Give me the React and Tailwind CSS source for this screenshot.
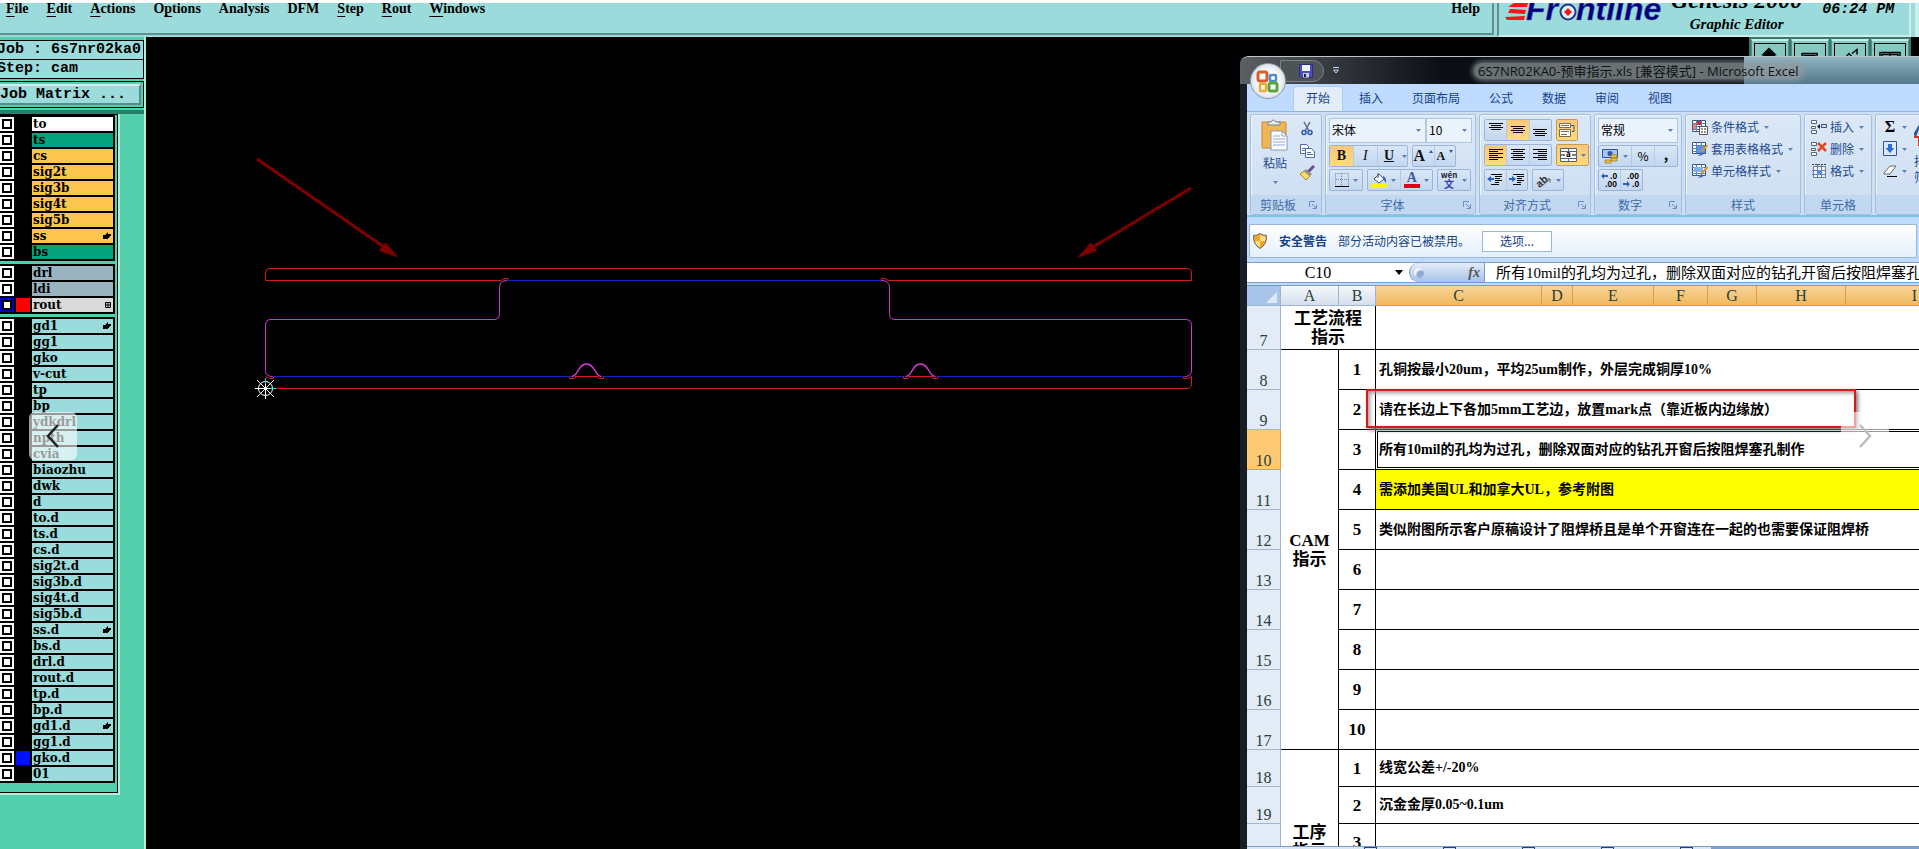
import { useState } from "react";
import clsx from "clsx";

const menus = [
  ["", "F", "ile"],
  ["", "E", "dit"],
  ["", "A", "ctions"],
  ["O", "p", "tions"],
  ["Analysis", "", ""],
  ["DFM", "", ""],
  ["", "S", "tep"],
  ["", "R", "out"],
  ["", "W", "indows"],
];

const layerGroups = [
  [
    { name: "to", bg: "bg-white" },
    { name: "ts", bg: "bg-[#05a47c]" },
    { name: "cs", bg: "bg-[#fdc74f]" },
    { name: "sig2t", bg: "bg-[#fdc74f]" },
    { name: "sig3b", bg: "bg-[#fdc74f]" },
    { name: "sig4t", bg: "bg-[#fdc74f]" },
    { name: "sig5b", bg: "bg-[#fdc74f]" },
    { name: "ss", bg: "bg-[#fdc74f]", mark: "hand" },
    { name: "bs", bg: "bg-[#05a47c]" },
  ],
  [
    { name: "drl", bg: "bg-[#9ab4bf]" },
    { name: "ldi", bg: "bg-[#9ab4bf]" },
    { name: "rout", bg: "bg-[#dadada]", box: "bg-[#0000c8]", color: "bg-[#ff0000]", mark: "grid" },
  ],
  [
    { name: "gd1", mark: "hand" },
    { name: "gg1" },
    { name: "gko" },
    { name: "v-cut" },
    { name: "tp" },
    { name: "bp" },
    { name: "ydkdrl" },
    { name: "npth" },
    { name: "cvia" },
    { name: "biaozhu" },
    { name: "dwk" },
    { name: "d" },
    { name: "to.d" },
    { name: "ts.d" },
    { name: "cs.d" },
    { name: "sig2t.d" },
    { name: "sig3b.d" },
    { name: "sig4t.d" },
    { name: "sig5b.d" },
    { name: "ss.d", mark: "hand" },
    { name: "bs.d" },
    { name: "drl.d" },
    { name: "rout.d" },
    { name: "tp.d" },
    { name: "bp.d" },
    { name: "gd1.d", mark: "hand" },
    { name: "gg1.d" },
    { name: "gko.d", color: "bg-[#0010ff]" },
    { name: "01" },
  ],
];

const tabs = ["开始", "插入", "页面布局", "公式", "数据", "审阅", "视图"];

const columns = [
  ["A", 58],
  ["B", 37],
  ["C", 166],
  ["D", 31],
  ["E", 81],
  ["F", 54],
  ["G", 49],
  ["H", 89],
  ["I", 138],
];

const camRows = [
  { row: 8, no: 1, text: "孔铜按最小20um，平均25um制作，外层完成铜厚10%" },
  { row: 9, no: 2, text: "请在长边上下各加5mm工艺边，放置mark点（靠近板内边缘放）" },
  { row: 10, no: 3, text: "所有10mil的孔均为过孔，删除双面对应的钻孔开窗后按阻焊塞孔制作", active: true },
  { row: 11, no: 4, text: "需添加美国UL和加拿大UL，参考附图", fill: "bg-[#ffff00]" },
  { row: 12, no: 5, text: "类似附图所示客户原稿设计了阻焊桥且是单个开窗连在一起的也需要保证阻焊桥" },
  { row: 13, no: 6 },
  { row: 14, no: 7 },
  { row: 15, no: 8 },
  { row: 16, no: 9 },
  { row: 17, no: 10 },
];

const processRows = [
  { row: 18, no: 1, text: "线宽公差+/-20%" },
  { row: 19, no: 2, text: "沉金金厚0.05~0.1um" },
  { row: 20, no: 3 },
  { row: 21, no: 4 },
  { row: 22, no: 5 },
];

/* ---------- Genesis editor ---------- */

function FrontlineLogo() {
  return (
    <svg width="166" height="30" viewBox="0 0 166 30" className="shrink-0" role="img" aria-label="Frontline">
      <g fill="#f01818">
        <path d="M9 0h14l-1 4H3z" />
        <path d="M5 6l16 1-1 4L3 10z" />
        <path d="M0 14l20-1-1 4H2z" />
      </g>
      <text
        x="21"
        y="17"
        className="font-['Liberation_Sans'] text-[32px] font-bold italic"
        fill="#00007c"
        stroke="#5a6fae"
        strokeWidth="0.5"
      >
        Fr
      </text>
      <circle cx="63" cy="9" r="7.5" fill="#d9f2f4" stroke="#2a3690" strokeWidth="2" />
      <path d="M63 5l4 4-4 4-4-4z" fill="#f01818" />
      <text
        x="71"
        y="17"
        className="font-['Liberation_Sans'] text-[32px] font-bold italic"
        fill="#00007c"
        stroke="#5a6fae"
        strokeWidth="0.5"
      >
        ntline
      </text>
    </svg>
  );
}

function TopBar() {
  return (
    <header className="flex h-[37px] shrink-0 border-t-[3px] border-white bg-[#9cdbdb] font-['Liberation_Serif',serif] text-black">
      <nav className="mb-0.5 flex flex-1 items-start gap-[18px] border-r-2 border-b-2 border-[#5f8f8f] pl-1.5 text-sm leading-3 font-bold">
        {menus.map(([pre, key, post]) => (
          <button key={pre + key + post} className="leading-3 whitespace-nowrap">
            {pre}
            <span className="underline underline-offset-[3px]">{key}</span>
            {post}
          </button>
        ))}
        <button className="ml-auto pr-3 leading-3">Help</button>
      </nav>
      <div className="ml-[3px] flex w-[414px] border-r-2 border-b-2 border-l-2 border-[#cdeeee] border-l-[#5f8f8f]">
        <div className="pl-1.5">
          <FrontlineLogo />
        </div>
        <div className="flex flex-1 flex-col items-center pr-5">
          <div className="flex h-[5px] w-full items-end justify-center overflow-hidden">
            <p className="text-2xl leading-4 font-bold whitespace-nowrap italic">Genesis 2000</p>
          </div>
          <p className="mt-1.5 text-[15px] leading-5 font-bold whitespace-nowrap italic">Graphic Editor</p>
        </div>
        <p className="w-[88px] pt-px font-['Liberation_Mono',monospace] text-[15px] leading-3 font-bold whitespace-nowrap italic">
          06:24 PM
        </p>
      </div>
      <div className="ml-1 w-1 bg-[#c6f1ef]" />
    </header>
  );
}

function LayerMark({ type }) {
  if (type === "hand") {
    return (
      <svg width="8" height="8" viewBox="0 0 8 8">
        <path d="M0 3h2l3-3v2h3v2H7v1H6v1H5v1H1L0 7z" fill="#000" />
      </svg>
    );
  }
  return (
    <svg width="6" height="6" viewBox="0 0 6 6">
      <path d="M.5.5h5v5h-5zM3 .5v5M.5 3h5" fill="none" stroke="#000" />
    </svg>
  );
}

function LayerRow({ layer }) {
  return (
    <label className="flex h-4 gap-0.5 bg-black pb-0.5">
      <span className={clsx("flex w-3.5 items-center pl-0.5", layer.box || "bg-white")}>
        <input type="checkbox" className="size-2.5 appearance-none border-2 border-black bg-white" />
      </span>
      <span className={clsx("w-3.5", layer.color)} />
      <span
        className={clsx(
          "flex w-[81px] items-center justify-between pr-0.5 pl-px font-['DejaVu_Serif',serif] text-xs leading-3 font-bold",
          layer.bg || "bg-[#9cdbdb]"
        )}
      >
        {layer.name}
        {layer.mark && <LayerMark type={layer.mark} />}
      </span>
    </label>
  );
}

function LayerPanel() {
  return (
    <aside className="w-[146px] shrink-0 border-r-2 border-[#b4ecd9] bg-[#53cfae] font-['Liberation_Mono',monospace]">
      <div className="border-b-4 border-[#2a7f6b] pt-[3px] pb-0.5">
        <div className="border border-l-0 border-black bg-[#9cdbdb] text-[15px] font-bold whitespace-nowrap">
          <p className="-ml-[3px] h-[19px] leading-[18px]">Job : 6s7nr02ka0</p>
          <p className="-ml-[3px] h-[18px] leading-[17px] shadow-[0_-1px_0_#000]">Step: cam</p>
        </div>
        <div className="mt-0.5 border border-l-0 border-black p-0.5 pl-0">
          <button className="block h-[21px] w-full border-t-2 border-r-2 border-b-2 border-[#528f8c] border-t-[#c6f3ee] bg-[#9cdbdb] text-left text-[15px] leading-4 font-bold whitespace-nowrap">
            Job Matrix ...
          </button>
        </div>
      </div>
      <div className="w-[120px] border-r-2 border-b-2 border-[#b4ecd9] text-black">
        <div className="flex flex-col gap-[3px] border-t border-r border-b border-black pb-[9px]">
          {layerGroups.map((group, i) => (
            <div key={i} className="w-[115px] border-t-2 border-black bg-black">
              {group.map((layer) => (
                <LayerRow key={layer.name} layer={layer} />
              ))}
            </div>
          ))}
        </div>
      </div>
    </aside>
  );
}

function Bump() {
  return (
    <>
      <path d="M-16 .5h32" stroke="#000" />
      <path d="M-12 .5h24M-17 .5v2h5l1.500-2M17 .5v2h-5l-1.500-2" stroke="#d41c1c" />
      <path d="M-15 .5C-8 .5-9-12 0-12S8 .5 15 .5" stroke="#d23cd2" strokeWidth="1.300" />
    </>
  );
}

function BoardCanvas() {
  return (
    <div className="min-w-0 flex-1 overflow-hidden bg-black">
      <svg width="1100" height="420" viewBox="146 37 1100 420" fill="none">
        <g stroke="#d41c1c">
          <path d="M265.500 280.500v-8q0-4 4-4h918q4 0 4 4v8H888l-3-2h-4v2" />
          <path d="M265.500 280.500H501l3-2h4v2" />
          <path d="M265.500 376.500l4 2h4v-2M265.500 388.500H1187q4.500 0 4.500-4.500v-7.500l-4 2h-4v-2" />
        </g>
        <path d="M508 280.500h373M273 376.500h910" stroke="#1420c0" />
        <g stroke="#d23cd2">
          <path d="M507 280.500q-7.500 0-7.500 7v26q0 6-5.500 6H271q-5.500 0-5.500 6v45q0 6 7 6" />
          <path d="M881 280.500q8.500 0 8.500 7v26q0 6 5.500 6h290.500q6 0 6 6v45q0 6-7 6" />
        </g>
        <g transform="translate(586.500 376)">
          <Bump />
        </g>
        <g transform="translate(920.500 376)">
          <Bump />
        </g>
        <g stroke="#fff">
          <circle cx="265.500" cy="388.500" r="7" />
          <path d="M255 388.500h21M265.500 378v21M257 380l17 17M274 380l-17 17" />
        </g>
        <path d="M265.500 378v6M270 388.500h6" stroke="#2ad4dc" />
        <g stroke="#800000" strokeWidth="3" fill="#800000">
          <path d="M257 159l127 88M1191 188l-98 59" />
          <path d="M397 256.500l-17.500-6 6-7.500z" strokeWidth="1" />
          <path d="M1078.500 257l18-6.500-5.500-7.500z" strokeWidth="1" />
        </g>
      </svg>
    </div>
  );
}

function ViewTools() {
  return (
    <div className="absolute top-[37px] right-2 flex gap-0.5 bg-[#3d7668] px-0.5 pt-0.5">
      {[
        "M11 19v-6H7l3-3H8l6-6 6 6h-2l3 3h-4v6z",
        "M7 19V9h15v10M9 19v-8h11v8",
        "M5 19l9-10 9 10M17 9l5-4v5M13 16l4-3",
        "M5 19V8h20v11M15 8v11M7 19v-9h16v9",
      ].map((d, i) => (
        <button
          key={d}
          aria-label={["Up", "Screen", "Home", "Split"][i]}
          className="h-10 w-[38px] border border-t-2 border-[#4d8f86] border-t-[#bdeee6] bg-[#86c9c1] p-0.5"
        >
          <svg viewBox="0 0 30 30" className="h-full w-full border border-black">
            <path d={d} fill={i === 0 ? "#000" : "none"} stroke="#000" strokeWidth="1.500" />
          </svg>
        </button>
      ))}
    </div>
  );
}

/* ---------- Excel window ---------- */

function Caret({ className }) {
  return (
    <svg width="5" height="3" viewBox="0 0 5 3" className={clsx("shrink-0", className)}>
      <path d="M0 0h5L2.500 3z" fill="#5b82b8" />
    </svg>
  );
}

function RibbonGroup({ title, launcher, className, children }) {
  return (
    <section
      className={clsx(
        "flex h-[101px] shrink-0 flex-col overflow-hidden rounded-[3px] border border-[#a3bfdf] bg-linear-to-b from-[#dce8f6] to-[#ccdef2] shadow-[inset_1px_1px_0_#eef5fc]",
        className
      )}
    >
      <div className="flex-1">{children}</div>
      <div className="flex h-[19px] items-center justify-center bg-[#c1d8f0] text-xs leading-4 text-[#3e6aaa]">
        <span className="flex-1 text-center">{title}</span>
        {launcher && (
          <button aria-label={title + "设置"} className="mx-1">
            <svg width="8" height="8" viewBox="0 0 8 8" fill="none" stroke="#6a8fc0">
              <path d="M.5 6V.5H6M3 3l4 4M7.500 3.500v4h-4" />
            </svg>
          </button>
        )}
      </div>
    </section>
  );
}

function Segment({ className, children }) {
  return (
    <div
      className={clsx(
        "flex h-[22px] divide-x divide-[#b4cae6] overflow-hidden rounded-[2px] border border-[#9ab5d9] bg-linear-to-b from-[#d9e6f6] to-[#c3d7f0]",
        className
      )}
    >
      {children}
    </div>
  );
}

function Tool({ label, on, className, children }) {
  return (
    <button
      aria-label={label}
      className={clsx(
        "flex flex-1 items-center justify-center gap-1",
        on && "bg-linear-to-b from-[#fbc77a] to-[#fdda7e]",
        className
      )}
    >
      {children}
    </button>
  );
}

function Combo({ label, value, className }) {
  return (
    <div className={clsx("relative h-[25px] border border-[#b0c8e8] bg-[#eaf2fb]", className)}>
      <select
        aria-label={label}
        defaultValue={value}
        className="block h-[21px] w-full appearance-none pl-0.5 text-xs text-black outline-none"
      >
        <option>{value}</option>
      </select>
      <Caret className="pointer-events-none absolute top-2.5 right-1" />
    </div>
  );
}

function Lines({ rows, y = 3 }) {
  return (
    <svg width="16" height="16" viewBox="0 0 16 16" stroke="#000">
      {rows.map(([x1, x2], i) => (
        <path key={i} d={`M${x1} ${y + i * 2 + 0.5}H${x2}`} />
      ))}
    </svg>
  );
}

const barsWide = [[1, 15], [3, 13], [1, 15], [3, 13]];

function IndentIcon({ out }) {
  return (
    <svg width="16" height="16" viewBox="0 0 16 16">
      <path d="M4 2.500h11M8 4.500h7M8 6.500h5M8 8.500h7M8 10.500h4M4 12.500h8" stroke="#000" />
      <path d={out ? "M0 7l4-3v2h3v2H4v2z" : "M7 7L3 4v2H0v2h3v2z"} fill="#2f62c0" />
    </svg>
  );
}

function TableIcon({ kind }) {
  return (
    <svg width="16" height="16" viewBox="0 0 16 16" fill="none" className="shrink-0">
      <path d="M.5 1.500h13v11H.5z" fill="#fff" stroke="#34558c" />
      <path d="M.5 4.500h13M.5 7.500h13M.5 10.500h13M4.500 1.500v11M9.500 1.500v11" stroke="#5b7fb8" />
      {kind === "cond" && (
        <>
          <path d="M5 2h4v4H5z" fill="#d2322a" />
          <path d="M1 5h3v5H1z" fill="#e88078" />
          <path d="M7.500 7.500h8v8h-8z" fill="#fff" stroke="#555" />
          <path d="M9 10h2M12 10h2M9 13h2M12 13h2" stroke="#222" />
        </>
      )}
      {kind === "table" && <path d="M5 5h8v7H5z" fill="#5b97e0" />}
      {kind === "cell" && <path d="M2 4h9v5H2z" fill="#7fb2ee" />}
      {kind !== "cond" && (
        <>
          <path d="M15.500 4L9 11" stroke="#d9962a" strokeWidth="2" />
          <path d="M10 10l-4 5 5-1z" fill="#3f74c8" />
        </>
      )}
    </svg>
  );
}

function CellsIcon({ kind }) {
  if (kind === "format") {
    return (
      <svg width="16" height="16" viewBox="0 0 16 16" fill="none" stroke="#444">
        <path d="M2.500 3.500h12v11h-12zM6.500 1v14M10.500 1v14M1 7.500h14M1 11.500h14" fill="#eef4fc" stroke="#6a7c98" />
        <path d="M6 7h5v5H6z" fill="#5b8fdc" stroke="none" />
        <path d="M1 1.500h14" strokeDasharray="2 1" />
      </svg>
    );
  }
  return (
    <svg width="16" height="16" viewBox="0 0 16 16" fill="none">
      <path d="M.5 1.500h5v3h-5zM.5 11.500h5v3h-5zM.5 7.500h4v2h-4z" fill="#fff" stroke="#53647e" />
      {kind === "insert" ? (
        <>
          <path d="M6 7.500l3-2.500v5z" fill="#222" />
          <path d="M10.500 5.500h5v3h-5z" fill="#cfe0f6" stroke="#34558c" />
        </>
      ) : (
        <path d="M7 2l8 8M15 2L7 10" stroke="#e04a2a" strokeWidth="2.500" />
      )}
    </svg>
  );
}

function TextTool({ icon, children }) {
  return (
    <button className="flex h-[22px] items-center gap-[3px] text-xs whitespace-nowrap text-[#1e4a90]">
      {icon}
      {children}
      <Caret className="ml-0.5" />
    </button>
  );
}

function Ribbon() {
  return (
    <div className="flex h-[106px] shrink-0 gap-[3px] overflow-hidden border-t border-b-2 border-[#8db4e3] border-b-[#7fc4dc] bg-[#cfdff3] px-[3px] pt-0.5">
      <RibbonGroup title="剪贴板" launcher className="w-[72px]">
        <div className="flex h-full">
          <button className="flex w-12 flex-col items-center pt-1 text-xs text-[#1e4a90]">
            <svg width="28" height="32" viewBox="0 0 28 32">
              <rect x="1" y="3" width="24" height="26" rx="1" fill="#eeb655" stroke="#c08a35" />
              <path d="M7 6V3h3q2-4 5 0h4v3z" fill="#e8edf3" stroke="#75808e" />
              <path d="M10 12h11l5 5v14H10z" fill="#fff" stroke="#8299bb" />
              <path d="M21 12v5h5M12 17h7M12 20h12M12 23h12M12 26h12" fill="none" stroke="#8ba6d2" />
            </svg>
            <span className="mt-0.5 leading-5">粘贴</span>
            <Caret className="mt-2" />
          </button>
          <div className="flex flex-col items-center gap-1.5 pt-1.5">
            <button aria-label="剪切">
              <svg width="16" height="16" viewBox="0 0 16 16" fill="none">
                <path d="M5 1l5 9M11 1L6 10" stroke="#5a6f8c" strokeWidth="1.500" />
                <circle cx="5" cy="11.500" r="2" stroke="#2858b4" strokeWidth="1.500" />
                <circle cx="11" cy="11.500" r="2" stroke="#2858b4" strokeWidth="1.500" />
              </svg>
            </button>
            <button aria-label="复制">
              <svg width="16" height="16" viewBox="0 0 16 16" fill="#fff" stroke="#4a6fae">
                <path d="M1.500 1.500h6l2 2v7h-8zM3 5.500h4M3 7.500h4" />
                <path d="M6.500 5.500h6l3 3v6h-9zM8 9.500h4M8 11.500h6" />
              </svg>
            </button>
            <button aria-label="格式刷">
              <svg width="16" height="16" viewBox="0 0 16 16">
                <path d="M15 1l-6 6" stroke="#6a4a90" strokeWidth="3" />
                <path d="M7 4l6 5-2 2-6-5z" fill="#8a8f98" />
                <path d="M5 6l6 5-4 4-6-6z" fill="#f3dc6c" stroke="#a88a2a" />
              </svg>
            </button>
          </div>
        </div>
      </RibbonGroup>

      <RibbonGroup title="字体" launcher className="w-[151px]">
        <div className="flex flex-col gap-0.5 pt-[3px] pl-[3px]">
          <div className="flex">
            <Combo label="字体" value="宋体" className="w-[97px]" />
            <Combo label="字号" value="10" className="w-[46px]" />
          </div>
          <div className="flex gap-1 font-['Liberation_Serif',serif] text-[#111]">
            <Segment className="w-[79px]">
              <Tool label="加粗" on><b className="text-sm leading-4">B</b></Tool>
              <Tool label="倾斜"><i className="text-sm leading-4">I</i></Tool>
              <Tool label="下划线" className="pl-1.5"><u className="mr-1 text-sm leading-4 font-bold">U</u><Caret /></Tool>
            </Segment>
            <Segment className="w-11">
              <Tool label="增大字号" className="gap-0">
                <b className="text-base leading-4">A</b>
                <svg width="4" height="3" viewBox="0 0 4 3" className="mb-2.5"><path d="M2 0l2 3H0z" fill="#2f559c" /></svg>
              </Tool>
              <Tool label="减小字号" className="gap-0">
                <b className="text-xs leading-4">A</b>
                <svg width="4" height="3" viewBox="0 0 4 3" className="mb-2.5"><path d="M0 0h4L2 3z" fill="#2f559c" /></svg>
              </Tool>
            </Segment>
          </div>
          <div className="flex gap-1">
            <Segment className="w-[34px]">
              <Tool label="边框">
                <svg width="14" height="14" viewBox="0 0 14 14" fill="none" stroke="#7a8698">
                  <path d="M.5.5h13v12M.5.5v12M6.500 1v12M1 6.500h13" strokeDasharray="1 1" />
                  <path d="M0 13.500h14" stroke="#000" />
                </svg>
                <Caret />
              </Tool>
            </Segment>
            <Segment className="w-[66px]">
              <Tool label="填充颜色">
                <svg width="16" height="16" viewBox="0 0 16 16">
                  <path d="M7 1v5M3 7l5-5 5 5-5 4z" fill="#f4f7fb" stroke="#44556e" />
                  <path d="M12 4q4 2 3 7-2-3-3-4z" fill="#3464b8" />
                  <path d="M0 12h16v4H0z" fill="#f8f800" />
                </svg>
                <Caret />
              </Tool>
              <Tool label="字体颜色">
                <span className="flex w-4 flex-col items-center border-b-4 border-[#e00018] font-['Liberation_Serif',serif] text-sm leading-3 font-bold text-[#3a5c9c]">
                  A
                </span>
                <Caret />
              </Tool>
            </Segment>
            <Segment className="w-[34px]">
              <Tool label="拼音">
                <svg width="17" height="18" viewBox="0 0 17 18" textAnchor="middle" fontWeight="bold">
                  <text x="8" y="7" fontSize="8" fill="#222233">wén</text>
                  <text x="8" y="17" fontSize="10" fill="#3a3fa8">文</text>
                </svg>
                <Caret />
              </Tool>
            </Segment>
          </div>
        </div>
      </RibbonGroup>

      <RibbonGroup title="对齐方式" launcher className="w-28">
        <div className="flex flex-col gap-[3px] pt-1 pl-1">
          <div className="flex gap-1">
            <Segment className="w-[68px]">
              <Tool label="顶端对齐"><Lines rows={barsWide} y={1} /></Tool>
              <Tool label="垂直居中" on><Lines rows={barsWide} y={4} /></Tool>
              <Tool label="底端对齐"><Lines rows={barsWide} y={7} /></Tool>
            </Segment>
            <Segment className="w-[22px] border-[#c79a4e]">
              <Tool label="自动换行" on>
                <svg width="16" height="16" viewBox="0 0 16 16" fill="#fff" stroke="#7b6a4e">
                  <path d="M.5 1.500h11v4H.5zM.5 7.500h11v7H.5z" />
                  <path d="M2 3.500h8M2 9.500h8M2 12.500h6" />
                  <path d="M12 3.500h3v6h-2" fill="none" stroke="#34558c" />
                </svg>
              </Tool>
            </Segment>
          </div>
          <div className="flex gap-1">
            <Segment className="w-[68px]">
              <Tool label="左对齐" on><Lines rows={[[1, 15], [1, 10], [1, 15], [1, 10], [1, 15], [1, 10]]} y={2} /></Tool>
              <Tool label="居中"><Lines rows={[[1, 15], [3, 13], [1, 15], [3, 13], [1, 15], [3, 13]]} y={2} /></Tool>
              <Tool label="右对齐"><Lines rows={[[1, 15], [6, 15], [1, 15], [6, 15], [1, 15], [6, 15]]} y={2} /></Tool>
            </Segment>
            <Segment className="w-[33px] border-[#c79a4e]">
              <Tool label="合并后居中" on>
                <svg width="17" height="16" viewBox="0 0 17 16" fill="#fff" stroke="#4c6488">
                  <path d="M.5 1.500h16v13H.5zM.5 4.500h16M.5 11.500h16M8.500 1.500v3M8.500 11.500v3" />
                  <text x="6" y="10" fontSize="8" fontWeight="bold" fill="#000" stroke="none">a</text>
                  <path d="M1 8h4M12 8h4" stroke="#000" />
                </svg>
                <Caret />
              </Tool>
            </Segment>
          </div>
          <div className="flex gap-1">
            <Segment className="w-[44px]">
              <Tool label="减少缩进量"><IndentIcon out /></Tool>
              <Tool label="增加缩进量"><IndentIcon /></Tool>
            </Segment>
            <Segment className="w-8">
              <Tool label="方向">
                <svg width="16" height="16" viewBox="0 0 16 16">
                  <text x="0" y="13" fontSize="10" fontWeight="bold" fill="#333" transform="rotate(-40 6 10)">ab</text>
                  <path d="M6 14l8-7M10.500 7H14v3.500" fill="none" stroke="#666" />
                </svg>
                <Caret />
              </Tool>
            </Segment>
          </div>
        </div>
      </RibbonGroup>

      <RibbonGroup title="数字" launcher className="w-[88px]">
        <div className="flex flex-col gap-0.5 pt-[3px] pl-[3px]">
          <Combo label="数字格式" value="常规" className="w-20" />
          <Segment className="w-20">
            <Tool label="会计数字格式" className="min-w-[33px]">
              <svg width="17" height="16" viewBox="0 0 17 16">
                <path d="M.5 1.500h15v8H.5z" fill="#a8c4ee" stroke="#2f559c" />
                <circle cx="8" cy="5.500" r="2.500" fill="#2f559c" />
                <path d="M9 7h6v3H9zM9 10h6v3H9zM3 12h6v3H3z" fill="#f0c040" stroke="#9c7414" strokeWidth=".7" />
              </svg>
              <Caret />
            </Tool>
            <Tool label="百分比"><span className="text-xs leading-4">%</span></Tool>
            <Tool label="千位分隔"><b className="pb-1 text-sm leading-4">,</b></Tool>
          </Segment>
          <Segment className="w-[45px]">
            <Tool label="增加小数位数">
              <svg width="18" height="18" viewBox="0 0 18 18" fontSize="8" fontWeight="bold">
                <path d="M0 5l3-3v2h4v2H3v2z" fill="#2f62c0" />
                <text x="9" y="8">.0</text>
                <text x="4" y="16">.00</text>
              </svg>
            </Tool>
            <Tool label="减少小数位数">
              <svg width="18" height="18" viewBox="0 0 18 18" fontSize="8" fontWeight="bold">
                <text x="4" y="8">.00</text>
                <path d="M7 13l-3-3v2H0v2h4v2z" fill="#2f62c0" />
                <text x="9" y="16">.0</text>
              </svg>
            </Tool>
          </Segment>
        </div>
      </RibbonGroup>

      <RibbonGroup title="样式" className="w-[116px]">
        <div className="pt-px pl-1.5">
          <TextTool icon={<TableIcon kind="cond" />}>条件格式</TextTool>
          <TextTool icon={<TableIcon kind="table" />}>套用表格格式</TextTool>
          <TextTool icon={<TableIcon kind="cell" />}>单元格样式</TextTool>
        </div>
      </RibbonGroup>

      <RibbonGroup title="单元格" className="w-[68px]">
        <div className="pt-px pl-1.5">
          <TextTool icon={<CellsIcon kind="insert" />}>插入</TextTool>
          <TextTool icon={<CellsIcon kind="delete" />}>删除</TextTool>
          <TextTool icon={<CellsIcon kind="format" />}>格式</TextTool>
        </div>
      </RibbonGroup>

      <RibbonGroup title="" className="w-[120px]">
        <div className="flex">
          <div className="w-[38px] shrink-0 pt-px pl-[7px]">
            <TextTool icon={<b className="w-3.5 font-['Liberation_Serif',serif] text-base text-black">Σ</b>} />
            <TextTool
              icon={
                <svg width="14" height="16" viewBox="0 0 14 16">
                  <path d="M.5.5h13v14H.5z" fill="#dce9fa" stroke="#2f559c" />
                  <path d="M5 3h4v4h2.500L7 12 2.500 7H5z" fill="#2f6fdc" />
                </svg>
              }
            />
            <TextTool
              icon={
                <svg width="14" height="14" viewBox="0 0 14 14">
                  <path d="M1 9l6-7h6l-6 8H1z" fill="#fff" stroke="#666" />
                  <path d="M4 12.500h10" stroke="#000" />
                </svg>
              }
            />
          </div>
          <button className="flex w-14 shrink-0 flex-col items-start text-xs leading-4 text-[#1e4a90]">
            <svg width="30" height="34" viewBox="0 0 30 34" className="mb-1">
              <path d="M0 20l6-10v10M4 14l-3 8" fill="none" stroke="#2f559c" strokeWidth="2" />
              <path d="M0 22h5v9" fill="none" stroke="#d2322a" strokeWidth="2" />
            </svg>
            <span>排序和</span>
            <span>筛选</span>
          </button>
        </div>
      </RibbonGroup>
    </div>
  );
}

function RowHeader({ row, active }) {
  return (
    <th
      scope="row"
      className={clsx(
        "border-r border-b p-0 text-center align-bottom font-['Liberation_Serif',serif] text-base leading-4 font-normal text-[#27413e]",
        active ? "border-[#e59a3c] bg-[#fdc973]" : "border-[#9eb6ce] bg-[#e3ebf6]"
      )}
    >
      {row}
    </th>
  );
}

function SheetRow({ item, height, children }) {
  return (
    <tr className={height}>
      <RowHeader row={item.row} active={item.active} />
      {children}
      <td className="border-r border-b border-black text-center font-['Liberation_Serif',serif] text-[17px] leading-[19px] font-bold">
        {item.no}
      </td>
      <td
        colSpan={7}
        className={clsx(
          "border-b border-black pl-[3px] text-sm leading-5 font-bold whitespace-nowrap",
          item.fill,
          item.active && "shadow-[inset_0_0_0_1px_#fff,inset_0_0_0_2px_#000]"
        )}
      >
        {item.text}
      </td>
    </tr>
  );
}

function Sheet() {
  return (
    <table className="w-[737px] table-fixed border-separate border-spacing-0 bg-white font-['Liberation_Serif','Noto_Sans_CJK_SC',serif] text-black">
      <colgroup>
        <col className="w-[34px]" />
        {columns.map(([name, width]) => (
          <col key={name} style={{ width }} />
        ))}
      </colgroup>
      <thead>
        <tr className="h-5">
          <th className="border-r border-b border-[#9eb6ce] bg-[#a9c4e9] p-0">
            <svg width="12" height="12" viewBox="0 0 12 12" className="mt-1 mr-0.5 ml-auto">
              <path d="M11 0v11H0z" fill="#dfe9f6" />
            </svg>
          </th>
          {columns.map(([name], i) => (
            <th
              key={name}
              scope="col"
              className={clsx(
                "border-r border-b p-0 text-base leading-4 font-normal text-[#27413e]",
                i < 2
                  ? "border-[#9eb6ce] bg-linear-to-b from-[#f6f9fc] to-[#d5deec]"
                  : "border-[#e59a3c] bg-linear-to-b from-[#f8d499] to-[#f0b95c]"
              )}
            >
              {name}
            </th>
          ))}
        </tr>
      </thead>
      <tbody>
        <tr className="h-11">
          <RowHeader row={7} />
          <td colSpan={2} className="border-r border-b border-black text-center text-[17px] leading-[19px] font-bold">
            工艺流程
            <br />
            指示
          </td>
          <td colSpan={7} className="border-b border-black" />
        </tr>
        {camRows.map((item, i) => (
          <SheetRow key={item.row} item={item} height="h-10">
            {i === 0 && (
              <td
                rowSpan={10}
                className="border-r border-b border-black text-center text-[17px] leading-[19px] font-bold"
              >
                CAM
                <br />
                指示
              </td>
            )}
          </SheetRow>
        ))}
        {processRows.map((item, i) => (
          <SheetRow key={item.row} item={item} height="h-[37px]">
            {i === 0 && (
              <td
                rowSpan={5}
                className="border-r border-b border-black text-center text-[17px] leading-[19px] font-bold"
              >
                工序
                <br />
                指示
              </td>
            )}
          </SheetRow>
        ))}
      </tbody>
    </table>
  );
}

function TitleBar() {
  return (
    <div className="relative flex h-7 shrink-0 items-center rounded-tl-lg border-t border-[#b9c6cc] bg-linear-to-r from-[#5c6063] via-[#0b0f14] via-30% to-[#0b0f14]">
      <div className="absolute inset-y-0 right-0 w-[175px] bg-linear-to-b from-[#8fb6c2] to-[#54788a]" />
      <div className="ml-10 flex h-[22px] w-[44px] items-center rounded-r-full border border-[#7d8285] bg-[#4e5356] pl-[18px]">
        <button aria-label="保存">
          <svg width="14" height="14" viewBox="0 0 14 14">
            <path d="M.5.5h13v13h-11l-2-2z" fill="#4a4fc0" stroke="#2a2c80" />
            <path d="M3 1h8v6H3z" fill="#eef2fb" />
            <path d="M4 9h6v4.500H4z" fill="#c9cfdf" />
            <path d="M5 10h2v3H5z" fill="#222" />
          </svg>
        </button>
      </div>
      <button aria-label="自定义快速访问工具栏" className="ml-[9px]">
        <svg width="6" height="7" viewBox="0 0 6 7" fill="none" stroke="#c6d8f4">
          <path d="M0 .5h6M.5 3h5L3 6z" />
        </svg>
      </button>
      <h1 className="absolute left-[234px] rounded-full bg-[#929b9e]/70 px-1 font-['Open_Sans','Noto_Sans_CJK_SC',sans-serif] text-[13px] leading-4 whitespace-nowrap text-[#111] shadow-[0_0_5px_2px_rgba(146,155,158,0.700)]">
        6S7NR02KA0-预审指示.xls [兼容模式] - Microsoft Excel
      </h1>
    </div>
  );
}

function OfficeButton() {
  return (
    <button
      aria-label="Office"
      className="absolute top-[7px] left-2.5 z-10 size-9 rounded-full border border-[#8d98a8] bg-radial from-white from-40% to-[#bcc6d6]"
    >
      <svg width="34" height="34" viewBox="0 0 34 34" fill="none" strokeWidth="3">
        <rect x="7" y="8" width="9" height="9" rx="2" stroke="#dc5a26" />
        <rect x="19" y="11" width="6" height="6" rx="1" stroke="#4a8fd4" strokeWidth="2.500" />
        <rect x="9" y="20" width="6" height="7" rx="1" stroke="#f0a830" strokeWidth="2.500" />
        <rect x="18" y="19" width="8" height="8" rx="2" stroke="#5aa63c" />
      </svg>
    </button>
  );
}

function ExcelWindow() {
  const [tab, setTab] = useState("开始");

  return (
    <div className="absolute top-[56px] right-0 bottom-0 left-[1240px] flex flex-col overflow-hidden rounded-tl-lg bg-[#0b0f16] font-['Noto_Sans_CJK_SC',sans-serif]">
      <TitleBar />
      <OfficeButton />
      <div className="flex min-h-0 flex-1 flex-col overflow-hidden border-l-[7px] border-[#191d24] bg-[#bfdbff]">
        <nav className="flex h-[27px] shrink-0 items-end pl-[47px]">
          {tabs.map((name) => (
            <button
              key={name}
              onClick={() => setTab(name)}
              className={clsx(
                "mr-[5px] h-6 rounded-t-[3px] px-3 pb-0.5 text-xs leading-4 text-[#15428b]",
                tab === name && "bg-[#e3edfa] shadow-[0_0_2px_#7fa5d8]"
              )}
            >
              {name}
            </button>
          ))}
        </nav>
        <Ribbon />

        <div className="mx-0.5 mt-[7px] flex h-[34px] shrink-0 items-center border border-[#9ab7dd] bg-linear-to-b from-white to-[#e4effb] pl-[3px] text-xs text-[#15428b]">
          <svg width="14" height="16" viewBox="0 0 14 16">
            <path d="M7 .5q3 2 6.500 2 .5 9-6.500 13Q0 11.500.5 2.500 4 2.500 7 .5z" fill="#f5a623" stroke="#5c6a7c" />
            <path d="M7 2v6h5q.5-2 .5-4.500Q9 3 7 2zM7 8v6Q3 12 2 8z" fill="#ffe08a" />
          </svg>
          <b className="ml-3">安全警告</b>
          <span className="ml-[11px]">部分活动内容已被禁用。</span>
          <button className="ml-3 h-[21px] w-[70px] border border-[#9ab7dd] bg-white leading-4">选项...</button>
        </div>

        <div className="mt-1 flex h-[21px] shrink-0 border-y border-[#7a9cc6] bg-white font-['Liberation_Serif','Noto_Sans_CJK_SC',serif] text-black">
          <input
            aria-label="名称框"
            defaultValue="C10"
            className="w-[142px] text-center text-base leading-4 outline-none"
          />
          <div className="flex w-5 items-center pl-1.5">
            <svg width="8" height="5" viewBox="0 0 8 5">
              <path d="M0 0h8L4 5z" fill="#000" />
            </svg>
          </div>
          <div className="flex w-[76px] items-center justify-between rounded-l-full border-r border-l border-[#7a9cc6] bg-linear-to-b from-[#e4edf9] to-[#a5c2e8] pr-1 pl-1">
            <span className="size-2.5 rounded-full bg-[#8fa9d0] shadow-[inset_2px_2px_2px_#fff]" />
            <i className="text-sm leading-4 font-bold text-[#555]">fx</i>
          </div>
          <input
            aria-label="编辑栏"
            defaultValue="所有10mil的孔均为过孔，删除双面对应的钻孔开窗后按阻焊塞孔制作"
            className="min-w-0 flex-1 pl-[11px] text-[15px] leading-4 whitespace-nowrap outline-none"
          />
        </div>

        <div className="relative mt-0.5 min-h-0 flex-1 overflow-hidden border-t border-[#7a9cc6]">
          <Sheet />
          <div className="absolute top-[103px] left-[119px] h-[39px] w-[490px] border-2 border-[#d01c1c] shadow-[2px_2px_4px_#777,inset_2px_2px_4px_#999]" />
        </div>

        <div className="flex h-[3px] shrink-0 gap-[50px] overflow-hidden border-t border-[#7a9cc6] bg-[#dbe8f8] pl-[117px]">
          {[1, 2, 3, 4, 5].map((n) => (
            <span key={n} className="mr-4 w-[13px] shrink-0 border-x border-t border-[#15428b]" />
          ))}
          <span className="-ml-12 flex-1 bg-[#7d9fd0]" />
        </div>
      </div>
    </div>
  );
}

export default function App() {
  return (
    <div className="relative flex h-screen flex-col overflow-hidden bg-black">
      <TopBar />
      <main className="flex min-h-0 flex-1">
        <LayerPanel />
        <BoardCanvas />
      </main>
      <ViewTools />
      <ExcelWindow />

      <button
        aria-label="Previous"
        className="absolute top-[412px] left-[29px] flex size-12 items-center justify-center rounded-md bg-white/60"
      >
        <svg width="14" height="24" viewBox="0 0 14 24" fill="none" stroke="#1c2226" strokeWidth="2.500">
          <path d="M12 1L2 12l10 11" />
        </svg>
      </button>
      <button
        aria-label="Next"
        className="absolute top-[412px] right-[30px] flex size-12 items-center justify-center rounded-md bg-white/60"
      >
        <svg width="14" height="24" viewBox="0 0 14 24" fill="none" stroke="#bdbdbd" strokeWidth="2.500">
          <path d="M2 1l10 11L2 23" />
        </svg>
      </button>
    </div>
  );
}
